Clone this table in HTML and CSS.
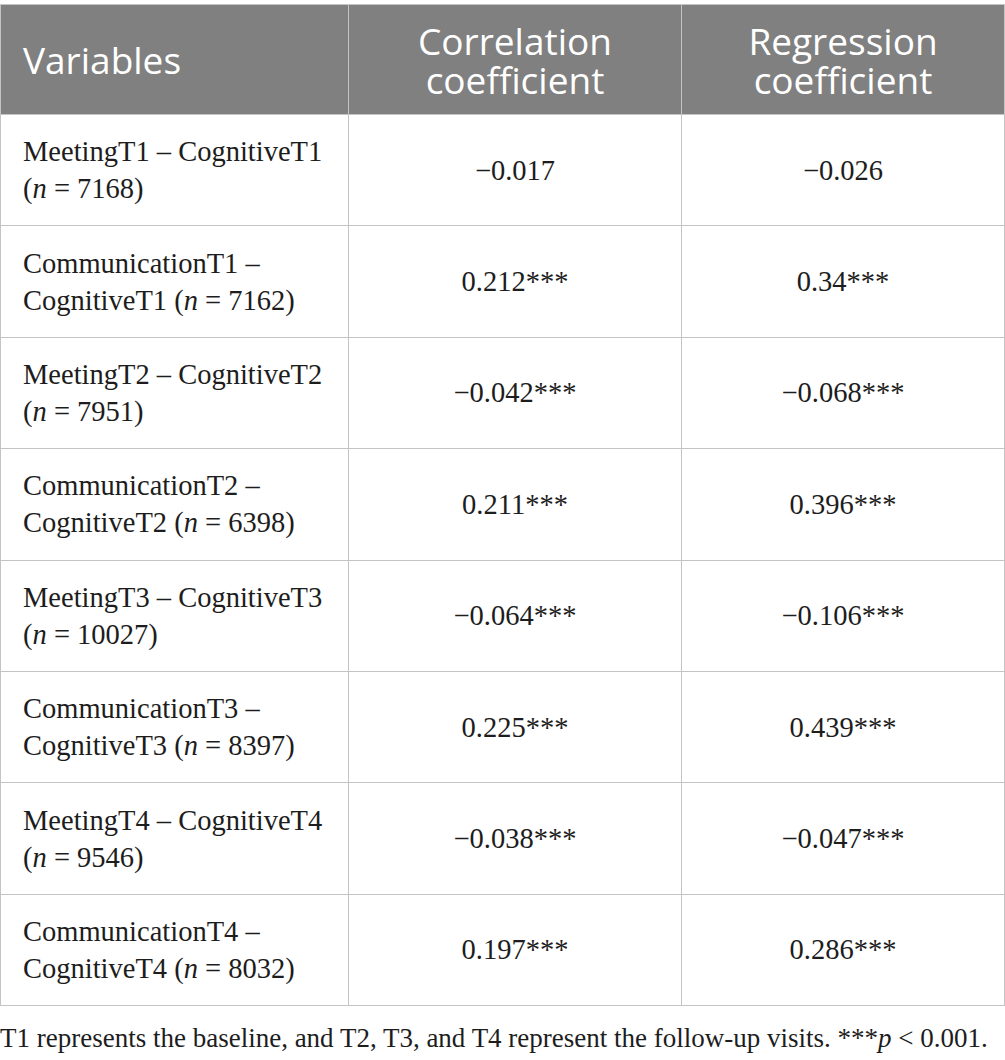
FILE: index.html
```html
<!doctype html>
<html>
  <head>
    <title>Correlation and regression</title>
    <link rel="stylesheet" href="styles.css">
  </head>
  <body>
    <table class="data">
      <thead>
        <tr>
          <th class="var">Variables</th>
          <th>Correlation<br>coefficient</th>
          <th>Regression<br>coefficient</th>
        </tr>
      </thead>
      <tbody>
        <tr><td class="var">MeetingT1 – CognitiveT1<br>(<i>n</i> = 7168)</td><td>−0.017</td><td>−0.026</td></tr>
        <tr><td class="var">CommunicationT1 –<br>CognitiveT1 (<i>n</i> = 7162)</td><td>0.212***</td><td>0.34***</td></tr>
        <tr><td class="var">MeetingT2 – CognitiveT2<br>(<i>n</i> = 7951)</td><td>−0.042***</td><td>−0.068***</td></tr>
        <tr><td class="var">CommunicationT2 –<br>CognitiveT2 (<i>n</i> = 6398)</td><td>0.211***</td><td>0.396***</td></tr>
        <tr><td class="var">MeetingT3 – CognitiveT3<br>(<i>n</i> = 10027)</td><td>−0.064***</td><td>−0.106***</td></tr>
        <tr><td class="var">CommunicationT3 –<br>CognitiveT3 (<i>n</i> = 8397)</td><td>0.225***</td><td>0.439***</td></tr>
        <tr><td class="var">MeetingT4 – CognitiveT4<br>(<i>n</i> = 9546)</td><td>−0.038***</td><td>−0.047***</td></tr>
        <tr><td class="var">CommunicationT4 –<br>CognitiveT4 (<i>n</i> = 8032)</td><td>0.197***</td><td>0.286***</td></tr>
      </tbody>
    </table>
    <p class="note">T1 represents the baseline, and T2, T3, and T4 represent the follow-up visits. ***<i>p</i> &lt; 0.001.</p>
  </body>
</html>
```
FILE: styles.css
```css
body { margin: 0; padding-top: 4px; background: #fff; color: #1d1d1d; font-family: "Liberation Serif", "DejaVu Serif", serif; }

.data { width: 1005px; border-collapse: collapse; table-layout: fixed; }
.data th, .data td { box-sizing: border-box; border: 1px solid #c4c4c4; text-align: center; vertical-align: middle; }
.data th:nth-child(1) { width: 348px; }
.data th:nth-child(2) { width: 333px; }

.data th { background: #7f807f; color: #fff; font-family: "Open Sans", sans-serif; font-weight: 400; font-size: 37px; line-height: 39px; height: 110px; padding: 0 12px; }
.data td { font-size: 28.5px; line-height: 37px; height: 111.4px; padding: 0 12px; }
.data .var { text-align: left; padding-left: 22px; }

.note { margin: 16px 0 0; font-size: 27px; line-height: 32px; white-space: nowrap; }
```
